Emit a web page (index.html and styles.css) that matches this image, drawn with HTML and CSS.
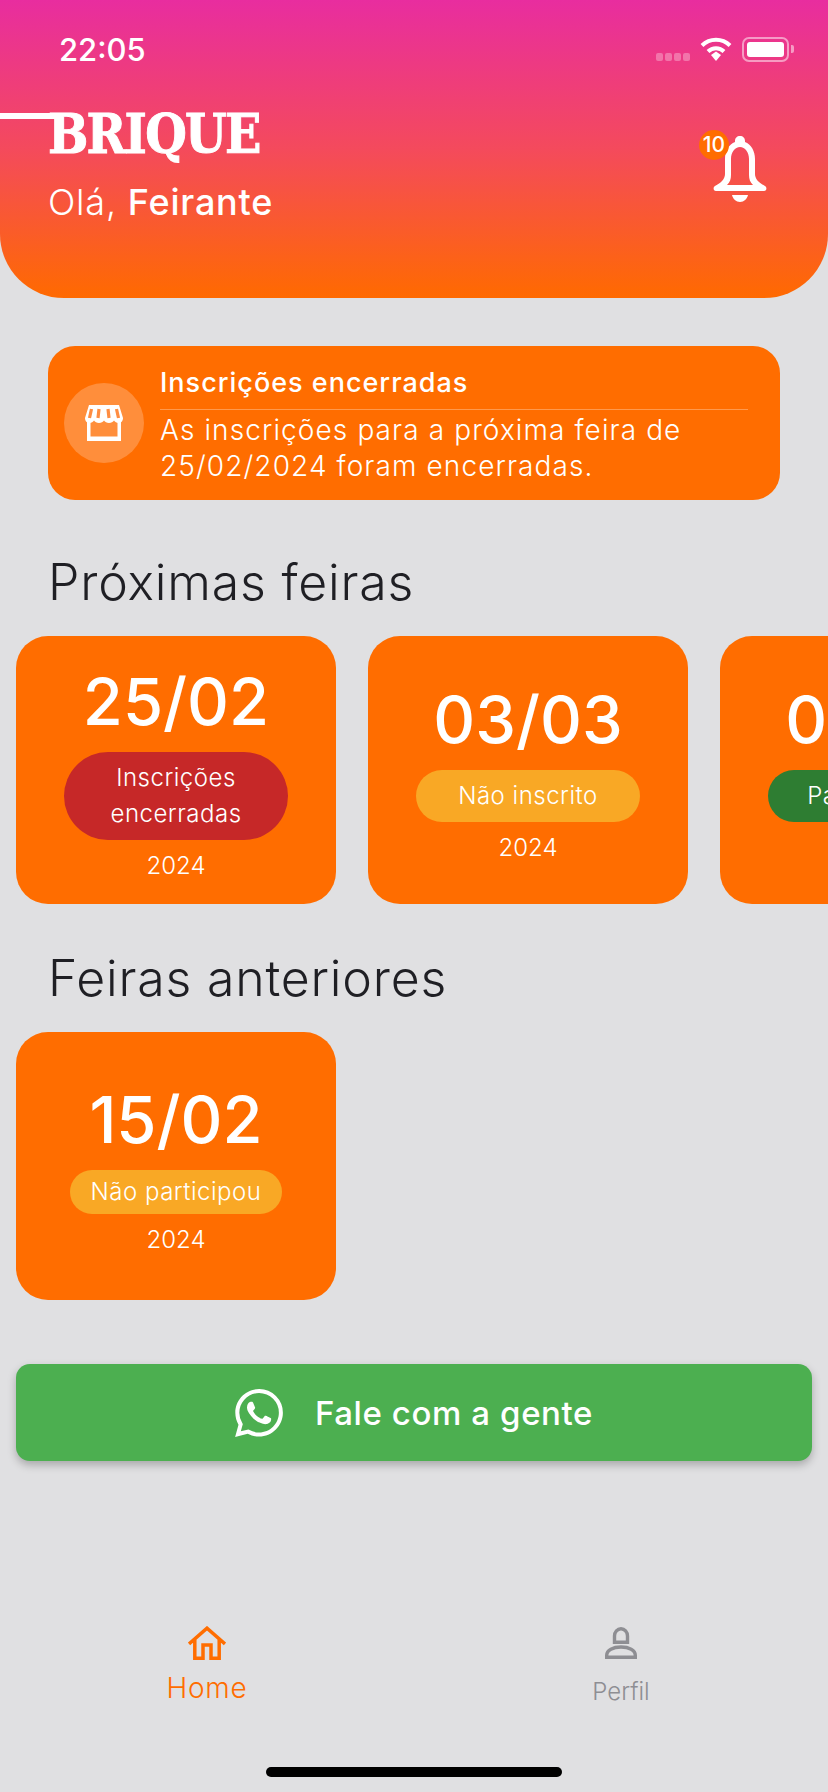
FILE: index.html
```html
<!DOCTYPE html>
<html lang="pt-BR">
<head>
    <meta charset="UTF-8">
    <meta name="viewport" content="width=device-width, initial-scale=1.0">
    <title>Brique</title>
    <link rel="stylesheet" href="styles.css">
</head>
<body>
    <div class="app">
        <header class="header">
            <div class="status-bar">
                <span class="time">22:05</span>
                <div class="status-icons">
                    <span class="signal"><i></i><i></i><i></i><i></i></span>
                    <svg class="wifi" width="32" height="24" viewBox="0 0 32 24">
                        <path d="M2 8.500a20 20 0 0 1 28 0" fill="none" stroke="#fff" stroke-width="4"/>
                        <path d="M8 14.500a11.500 11.500 0 0 1 16 0" fill="none" stroke="#fff" stroke-width="4"/>
                        <path d="M11 18l5-3.500 5 3.500-5 6z" fill="#fff"/>
                    </svg>
                    <span class="battery"><span class="battery-fill"></span></span>
                    <span class="battery-tip"></span>
                </div>
            </div>
            <div class="header-row">
                <div class="brand">
                    <span class="logo-line"></span>
                    <div class="logo">BRIQUE</div>
                    <div class="hello">Olá, <strong>Feirante</strong></div>
                </div>
                <div class="bell">
                    <svg width="54" height="66" viewBox="0 0 54 66">
                        <path fill-rule="evenodd" fill="#fff" d="M27 0c3 0 5 2 5 5v1c6 2 10 9 10 17v15c0 5 4 9 10 12c2 1 2 5-1 5H3c-3 0-3-4-1-5c6-3 10-7 10-12V23c0-8 4-15 10-17V5c0-3 2-5 5-5z M27 11c-5 0-9 5-9 12v16c0 4-1 7-4 10h26c-3-3-4-6-4-10V23c0-7-4-12-9-12z"/>
                        <path d="M19 59h16c-1 4-4 7-8 7s-7-3-8-7z" fill="#fff"/>
                    </svg>
                    <span class="badge">10</span>
                </div>
            </div>
        </header>

        <section class="notice">
            <div class="notice-icon">
                <svg width="38" height="36" viewBox="0 0 38 36">
                    <path d="M4 0h30l4 13c0 3-2 5-4.500 5-2 0-3.500-1-4.500-2.500-1 1.500-2.700 2.500-5 2.500s-4-1-5-2.500c-1 1.500-2.700 2.500-5 2.500s-4-1-5-2.500C8 17 6.500 18 4.500 18 2 18 0 16 0 13z" fill="#fff"/>
                    <path d="M2 17h3.500v14.500h27V17H36v19H2z" fill="#fff"/>
                    <path d="M6.500 4L4.500 13M14 4l-1 9M23 4l1 9M31.500 4l2 9" stroke="#ff8d42" stroke-width="3.200"/>
                </svg>
            </div>
            <div class="notice-body">
                <div class="notice-title">Inscrições encerradas</div>
                <div class="notice-text">As inscrições para a próxima feira de 25/02/2024 foram encerradas.</div>
            </div>
        </section>

        <h2 class="section-title">Próximas feiras</h2>
        <div class="cards">
            <div class="card">
                <div class="card-date">25/02</div>
                <div class="pill pill-red">Inscrições encerradas</div>
                <div class="card-year">2024</div>
            </div>
            <div class="card">
                <div class="card-date">03/03</div>
                <div class="pill pill-yellow">Não inscrito</div>
                <div class="card-year">2024</div>
            </div>
            <div class="card">
                <div class="card-date">09/03</div>
                <div class="pill pill-green">Participando</div>
                <div class="card-year">2024</div>
            </div>
        </div>

        <h2 class="section-title section-title-past">Feiras anteriores</h2>
        <div class="cards">
            <div class="card">
                <div class="card-date">15/02</div>
                <div class="pill pill-yellow pill-small">Não participou</div>
                <div class="card-year">2024</div>
            </div>
        </div>

        <button class="talk-btn">
            <svg width="48" height="48" viewBox="0 0 24 24">
                <path fill="#fff" d="M17.472 14.382c-.297-.149-1.758-.867-2.03-.967-.273-.099-.471-.148-.67.15-.197.297-.767.966-.94 1.164-.173.199-.347.223-.644.075-.297-.15-1.255-.463-2.39-1.475-.883-.788-1.48-1.761-1.653-2.059-.173-.297-.018-.458.13-.606.134-.133.298-.347.446-.52.149-.174.198-.298.298-.497.099-.198.05-.371-.025-.52-.075-.149-.669-1.612-.916-2.207-.242-.579-.487-.5-.669-.51-.173-.008-.371-.01-.57-.01-.198 0-.52.074-.792.372-.272.297-1.04 1.016-1.04 2.479 0 1.462 1.065 2.875 1.213 3.074.149.198 2.096 3.2 5.077 4.487.709.306 1.262.489 1.694.625.712.227 1.36.195 1.871.118.571-.085 1.758-.719 2.006-1.413.248-.694.248-1.289.173-1.413-.074-.124-.272-.198-.57-.347m-5.421 7.403h-.004a9.87 9.87 0 01-5.031-1.378l-.361-.214-3.741.982.998-3.648-.235-.374a9.86 9.86 0 01-1.51-5.26c.001-5.45 4.436-9.884 9.888-9.884 2.64 0 5.122 1.03 6.988 2.898a9.825 9.825 0 012.893 6.994c-.003 5.45-4.437 9.884-9.885 9.884m8.413-18.297A11.815 11.815 0 0012.05 0C5.495 0 .16 5.335.157 11.892c0 2.096.547 4.142 1.588 5.945L.057 24l6.305-1.654a11.882 11.882 0 005.683 1.448h.005c6.554 0 11.89-5.335 11.893-11.893a11.821 11.821 0 00-3.48-8.413z"/>
            </svg>
            <span>Fale com a gente</span>
        </button>

        <nav class="tabs">
            <div class="tab tab-active">
                <svg width="38" height="34" viewBox="0 0 38 34">
                    <path d="M1 18L19 2.200 37 18M6.800 13v19.300H15V19h8v13.300h8.200V13" fill="none" stroke="#ff6d00" stroke-width="3.500"/>
                </svg>
                <span>Home</span>
            </div>
            <div class="tab tab-profile">
                <svg width="32" height="32" viewBox="0 0 32 32">
                    <path d="M9.500 15.300V9a6.500 7.300 0 0 1 13 0v6.300z" fill="none" stroke="#8e8e93" stroke-width="3.400"/>
                    <path d="M1.700 30.300v-2C1.700 23 8 20 16 20s14.300 3 14.300 8.300v2z" fill="none" stroke="#8e8e93" stroke-width="3.400"/>
                </svg>
                <span>Perfil</span>
            </div>
        </nav>

        <div class="home-bar"></div>
    </div>
</body>
</html>
```

FILE: styles.css
```css
* {
    box-sizing: border-box;
}

body {
    margin: 0;
    background: #e0e0e2;
    font-family: 'Inter', 'Open Sans', sans-serif;
    color: #fff;
}

.app {
    width: 828px;
    height: 1792px;
    overflow: hidden;
    display: flex;
    flex-direction: column;
}

.header {
    height: 298px;
    flex-shrink: 0;
    background: linear-gradient(180deg, #e82d9f 0%, #f44a5c 50%, #ff6a00 100%);
    border-radius: 0 0 64px 64px / 0 0 64px 64px;
}

.status-bar {
    height: 100px;
    padding: 34px 34px 0 59px;
    display: flex;
    justify-content: space-between;
    align-items: flex-start;
}

.time {
    font-size: 31px;
    font-weight: 500;
    line-height: 32px;
}

.status-icons {
    display: flex;
    align-items: center;
    height: 26px;
    margin-top: 2px;
}

.signal {
    display: flex;
    gap: 2px;
    margin: 16px 10px 0 0;
}

.signal i {
    width: 7px;
    height: 8px;
    border-radius: 2px;
    background: rgba(255, 255, 255, 0.3);
}

.battery {
    width: 47px;
    height: 25px;
    margin-left: 10px;
    padding: 3px;
    border: 2px solid rgba(255, 255, 255, 0.5);
    border-radius: 7px;
}

.battery-fill {
    display: block;
    height: 100%;
    background: #fff;
    border-radius: 3px;
}

.battery-tip {
    width: 3px;
    height: 8px;
    margin-left: 2px;
    background: rgba(255, 255, 255, 0.5);
    border-radius: 0 2px 2px 0;
}

.header-row {
    padding: 0 61px 0 48px;
    display: flex;
    justify-content: space-between;
}

.brand {
    position: relative;
}

.logo-line {
    position: absolute;
    top: 13px;
    left: -48px;
    width: 55px;
    height: 6px;
    background: #fff;
}

.logo {
    font-family: 'DejaVu Serif', serif;
    font-weight: 700;
    font-size: 54px;
    line-height: 62px;
    letter-spacing: -2px;
    margin-top: 3px;
    transform: scaleX(0.885);
    transform-origin: left center;
    -webkit-text-stroke: 1px #fff;
}

.hello {
    font-size: 36px;
    line-height: 48px;
    margin-top: 13px;
    font-weight: 300;
    letter-spacing: 0.8px;
}

.hello strong {
    font-weight: 500;
}

.bell {
    position: relative;
    margin-top: 36px;
    width: 54px;
    height: 66px;
}

.badge {
    position: absolute;
    top: -6px;
    left: -14px;
    width: 30px;
    height: 30px;
    border-radius: 50%;
    background: #ff6d00;
    font-size: 21px;
    font-weight: 500;
    line-height: 30px;
    text-align: center;
}

.notice {
    height: 154px;
    flex-shrink: 0;
    margin: 48px 48px 0;
    padding: 16px 32px 0 16px;
    background: #ff6d00;
    border-radius: 27px;
    display: flex;
    align-items: flex-start;
    gap: 16px;
}

.notice-icon {
    width: 80px;
    height: 80px;
    margin-top: 21px;
    flex-shrink: 0;
    border-radius: 50%;
    background: rgba(255, 255, 255, 0.23);
    display: flex;
    align-items: center;
    justify-content: center;
}

.notice-body {
    flex: 1;
}

.notice-title {
    font-size: 27px;
    font-weight: 500;
    letter-spacing: 1px;
    line-height: 32px;
    padding-bottom: 10px;
    border-bottom: 1px solid rgba(255, 255, 255, 0.3);
    margin-top: 5px;
}

.notice-text {
    font-size: 28px;
    font-weight: 300;
    letter-spacing: 1.1px;
    line-height: 36px;
    margin-top: 2px;
}

.section-title {
    margin: 55px 0 27px 48px;
    font-size: 50px;
    line-height: 54px;
    font-weight: 300;
    letter-spacing: 0.8px;
    color: #1f1f24;
}

.section-title-past {
    margin-top: 47px;
}

.cards {
    display: flex;
    gap: 32px;
    padding-left: 16px;
    flex-shrink: 0;
}

.card {
    width: 320px;
    height: 268px;
    flex-shrink: 0;
    background: #ff6d00;
    border-radius: 32px;
    padding: 6px 48px 0;
    display: flex;
    flex-direction: column;
    align-items: center;
    justify-content: center;
}

.card-date {
    font-size: 65px;
    line-height: 80px;
    font-weight: 500;
}

.pill {
    width: 224px;
    padding: 8px 16px;
    margin-top: 10px;
    border-radius: 44px;
    font-size: 24px;
    font-weight: 300;
    letter-spacing: 0.5px;
    line-height: 36px;
    text-align: center;
}

.pill-small {
    width: 212px;
    padding: 4px 8px;
}

.pill-red {
    background: #c62828;
}

.pill-yellow {
    background: #f9a825;
}

.pill-green {
    background: #2e7d32;
}

.card-year {
    font-size: 24px;
    font-weight: 300;
    line-height: 36px;
    margin-top: 8px;
}

.talk-btn {
    height: 97px;
    flex-shrink: 0;
    margin: 64px 16px 0;
    border: none;
    border-radius: 14px;
    background: #4caf50;
    color: #fff;
    font-family: inherit;
    font-size: 33px;
    font-weight: 500;
    letter-spacing: 0.6px;
    display: flex;
    align-items: center;
    justify-content: center;
    gap: 32px;
    box-shadow: 0 4px 8px rgba(0, 0, 0, 0.25);
}

.tabs {
    display: grid;
    grid-template-columns: 1fr 1fr;
    margin-top: 165px;
}

.tab {
    display: flex;
    flex-direction: column;
    align-items: center;
    color: #8e8e93;
    font-size: 24px;
    font-weight: 300;
    line-height: 30px;
}

.tab-active {
    color: #ff6d00;
    font-size: 28px;
    letter-spacing: 0.8px;
    gap: 13px;
}

.tab-profile {
    padding-top: 1px;
    gap: 18px;
}

.home-bar {
    width: 296px;
    height: 10px;
    margin: 60px auto 0;
    flex-shrink: 0;
    background: #000;
    border-radius: 5px;
}
```
